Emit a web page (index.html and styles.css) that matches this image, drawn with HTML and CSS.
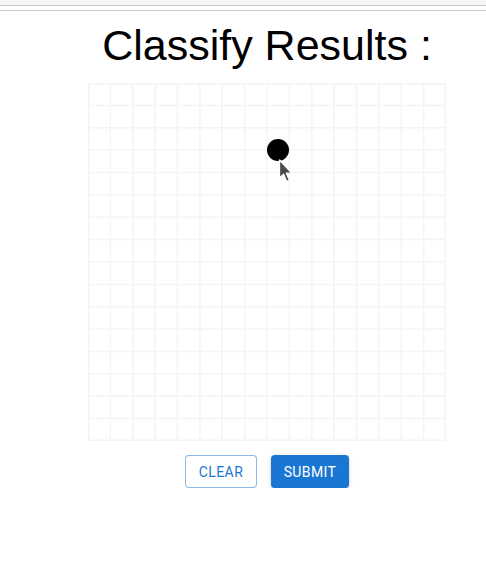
FILE: index.html
```html
<!DOCTYPE html>
<html>
<head>
<meta charset="utf-8">
<link rel="stylesheet" href="styles.css">
</head>
<body>
<div class="topbar"></div>
<div class="topgap"></div>
<main class="app">
  <h1 class="title">Classify Results :</h1>
  <div class="board">
    <svg class="grid" width="358" height="358" viewBox="0 0 358 358">
      <g stroke="#f4f4f4" stroke-width="1.5">
        <line x1="0.75" y1="0" x2="0.75" y2="358"/>
        <line x1="22.4" y1="0" x2="22.4" y2="358"/>
        <line x1="44.8" y1="0" x2="44.8" y2="358"/>
        <line x1="67.1" y1="0" x2="67.1" y2="358"/>
        <line x1="89.5" y1="0" x2="89.5" y2="358"/>
        <line x1="111.9" y1="0" x2="111.9" y2="358"/>
        <line x1="134.3" y1="0" x2="134.3" y2="358"/>
        <line x1="156.6" y1="0" x2="156.6" y2="358"/>
        <line x1="179" y1="0" x2="179" y2="358"/>
        <line x1="201.4" y1="0" x2="201.4" y2="358"/>
        <line x1="223.8" y1="0" x2="223.8" y2="358"/>
        <line x1="246.1" y1="0" x2="246.1" y2="358"/>
        <line x1="268.5" y1="0" x2="268.5" y2="358"/>
        <line x1="290.9" y1="0" x2="290.9" y2="358"/>
        <line x1="313.3" y1="0" x2="313.3" y2="358"/>
        <line x1="335.6" y1="0" x2="335.6" y2="358"/>
        <line x1="357.25" y1="0" x2="357.25" y2="358"/>
        <line y1="0.75" x1="0" y2="0.75" x2="358"/>
        <line y1="22.4" x1="0" y2="22.4" x2="358"/>
        <line y1="44.8" x1="0" y2="44.8" x2="358"/>
        <line y1="67.1" x1="0" y2="67.1" x2="358"/>
        <line y1="89.5" x1="0" y2="89.5" x2="358"/>
        <line y1="111.9" x1="0" y2="111.9" x2="358"/>
        <line y1="134.3" x1="0" y2="134.3" x2="358"/>
        <line y1="156.6" x1="0" y2="156.6" x2="358"/>
        <line y1="179" x1="0" y2="179" x2="358"/>
        <line y1="201.4" x1="0" y2="201.4" x2="358"/>
        <line y1="223.8" x1="0" y2="223.8" x2="358"/>
        <line y1="246.1" x1="0" y2="246.1" x2="358"/>
        <line y1="268.5" x1="0" y2="268.5" x2="358"/>
        <line y1="290.9" x1="0" y2="290.9" x2="358"/>
        <line y1="313.3" x1="0" y2="313.3" x2="358"/>
        <line y1="335.6" x1="0" y2="335.6" x2="358"/>
        <line y1="357.25" x1="0" y2="357.25" x2="358"/>
      </g>
      <circle cx="190" cy="67" r="11" fill="#000"/>
    </svg>
    <svg class="cursor" width="16" height="24" viewBox="0 0 16 24">
      <path d="M1.5 1 L1.5 19 L5.6 15.2 L8.6 22.4 L11.4 21.2 L8.4 14.2 L14 14.2 Z" fill="#4a4a4a" stroke="#fff" stroke-width="1.3" stroke-linejoin="round"/>
    </svg>
  </div>
  <div class="actions">
    <button class="btn btn-outline">Clear</button>
    <button class="btn btn-filled">Submit</button>
  </div>
</main>
</body>
</html>
```

FILE: styles.css
```css
html, body {
  margin: 0;
  padding: 0;
  background: #fff;
}
.topbar {
  height: 5px;
  background: #f6f6f6;
  border-bottom: 1px solid #c9c9c9;
}
.topgap {
  height: 4px;
  border-bottom: 1px solid #c9c9c9;
}
.app {
  width: 358px;
  margin-left: 88px;
  display: flex;
  flex-direction: column;
  align-items: center;
}
.title {
  margin: 4px 0 0;
  font-family: "Liberation Sans", Arial, sans-serif;
  font-weight: 400;
  font-size: 43px;
  line-height: 60px;
  color: #000;
  white-space: nowrap;
}
.board {
  position: relative;
  width: 358px;
  height: 358px;
  margin-top: 8px;
}
.grid {
  display: block;
}
.cursor {
  position: absolute;
  left: 190px;
  top: 76px;
}
.actions {
  display: flex;
  gap: 14px;
  margin-top: 14px;
}
.btn {
  height: 33px;
  font-family: Roboto, "Liberation Sans", sans-serif;
  font-size: 14px;
  font-weight: 400;
  letter-spacing: 0.4px;
  text-transform: uppercase;
  border-radius: 4px;
  cursor: pointer;
}
.btn-outline {
  width: 72px;
  background: #fff;
  color: #1976d2;
  border: 1px solid rgba(25, 118, 210, 0.5);
}
.btn-filled {
  width: 78px;
  background: #1976d2;
  color: #fff;
  border: none;
  box-shadow: 0 3px 1px -2px rgba(0,0,0,0.2), 0 2px 2px 0 rgba(0,0,0,0.14), 0 1px 5px 0 rgba(0,0,0,0.12);
}
```
